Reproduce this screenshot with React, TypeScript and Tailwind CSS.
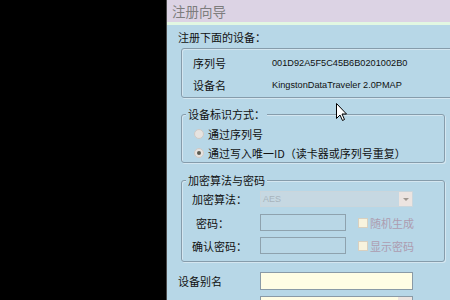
import React from "react";

const cjk = { fontFamily: '"Noto Sans CJK SC", "Noto Sans", sans-serif' };
const lat = { fontFamily: '"Liberation Sans", Arial, sans-serif' };

function GroupBox({
  label,
  className,
  children,
}: {
  label?: string;
  className: string;
  children: React.ReactNode;
}) {
  return (
    <div
      className={`relative shrink-0 border border-[#869cab] rounded-[3px] shadow-[inset_1px_1px_0_#d4e6f0,1px_1px_0_#d4e6f0] ${className}`}
    >
      {label && (
        <div
          className="absolute -top-[8px] left-[4px] bg-[#b7d7e7] px-[2px] text-[11px] leading-[14px] text-[#111]"
          style={cjk}
        >
          {label}
        </div>
      )}
      {children}
    </div>
  );
}

function Checkbox({ label }: { label: string }) {
  return (
    <div className="flex items-center ml-[12px]">
      <div className="w-[10px] h-[10px] bg-[#f7f3de] border border-[#d8d0c0]" />
      <span className="ml-[2px] text-[11px] leading-[14px] text-[#ad9cb0]" style={cjk}>
        {label}
      </span>
    </div>
  );
}

export default function App() {
  return (
    <div className="w-[450px] h-[300px] flex bg-black overflow-hidden">
      <div className="w-[166px] shrink-0 h-full bg-black" />
      <div className="w-px shrink-0 h-full bg-[#4a4a4a]" />
      <div className="relative flex-1 h-full flex flex-col bg-[#b7d7e7] overflow-hidden">
        <div className="h-[22px] shrink-0 bg-[#dcd3e4] flex items-center pl-[5px]">
          <span className="text-[13.5px] leading-[18px] text-[#7d7d7d]" style={cjk}>
            注册向导
          </span>
        </div>
        <div className="h-[3px] shrink-0 bg-[#e2f7e2]" />
        <div className="flex flex-col shrink-0 pl-[11px]">
          <div className="mt-[5px] h-[14px] shrink-0 text-[11px] leading-[14px] text-[#111]" style={cjk}>
            注册下面的设备：
          </div>
          <GroupBox className="mt-[4px] ml-[3px] w-[300px] min-w-[300px] h-[50px] pt-[7px]">
            <div className="flex items-center h-[14px]">
              <span className="w-[90px] shrink-0 pl-[11px] text-[11px] leading-[14px] text-[#111]" style={cjk}>
                序列号
              </span>
              <span className="text-[9.2px] leading-[14px] text-[#111] whitespace-nowrap" style={lat}>
                001D92A5F5C45B6B0201002B0
              </span>
            </div>
            <div className="flex items-center h-[14px] mt-[8px]">
              <span className="w-[90px] shrink-0 pl-[11px] text-[11px] leading-[14px] text-[#111]" style={cjk}>
                设备名
              </span>
              <span className="text-[9.2px] leading-[14px] text-[#111] whitespace-nowrap" style={lat}>
                KingstonDataTraveler 2.0PMAP
              </span>
            </div>
          </GroupBox>
          <GroupBox label="设备标识方式：" className="mt-[16px] ml-[3px] w-[264px] h-[49px] pt-[12px]">
            <div className="flex items-center h-[14px] pl-[12px]">
              <div className="w-[10px] h-[10px] rounded-full bg-[#e6e3e0] border border-[#cfcac6]" />
              <span className="ml-[4px] text-[11px] leading-[14px] text-[#111]" style={cjk}>
                通过序列号
              </span>
            </div>
            <div className="flex items-center h-[14px] mt-[5px] pl-[12px]">
              <div className="w-[10px] h-[10px] rounded-full bg-[#e6e3e0] border border-[#cfcac6] flex items-center justify-center">
                <div className="w-[4px] h-[4px] rounded-full bg-[#5a5a50]" />
              </div>
              <span className="ml-[4px] text-[11px] leading-[14px] text-[#111] whitespace-nowrap" style={cjk}>
                通过写入唯一ID（读卡器或序列号重复）
              </span>
            </div>
          </GroupBox>
          <GroupBox label="加密算法与密码" className="mt-[17px] ml-[3px] w-[264px] h-[82px] pt-[10px]">
            <div className="flex items-center h-[16px]">
              <span className="w-[78px] shrink-0 pl-[10px] text-[11px] leading-[14px] text-[#111]" style={cjk}>
                加密算法：
              </span>
              <div className="w-[153px] h-[16px] border border-[#cad6dc] bg-[#c6d8e2] flex items-center justify-between">
                <span className="pl-[2px] text-[9px] leading-[12px] text-[#a8b4bc]" style={lat}>
                  AES
                </span>
                <div className="w-[13px] h-[14px] bg-[#ece4e0] flex items-center justify-center">
                  <div className="w-0 h-0 border-l-[3px] border-r-[3px] border-t-[3px] border-l-transparent border-r-transparent border-t-[#a09890]" />
                </div>
              </div>
            </div>
            <div className="flex items-center h-[17px] mt-[7px]">
              <span className="w-[78px] shrink-0 pl-[14px] text-[11px] leading-[14px] text-[#111]" style={cjk}>
                密码：
              </span>
              <div className="w-[86px] h-[17px] border border-[#8ea2ae] bg-[#b9d7e6]" />
              <Checkbox label="随机生成" />
            </div>
            <div className="flex items-center h-[17px] mt-[6px]">
              <span className="w-[78px] shrink-0 pl-[10px] text-[11px] leading-[14px] text-[#111]" style={cjk}>
                确认密码：
              </span>
              <div className="w-[86px] h-[17px] border border-[#8ea2ae] bg-[#b9d7e6]" />
              <Checkbox label="显示密码" />
            </div>
          </GroupBox>
          <div className="flex items-center h-[18px] mt-[10px] shrink-0">
            <span className="w-[82px] shrink-0 text-[11px] leading-[14px] text-[#111]" style={cjk}>
              设备别名
            </span>
            <div className="w-[153px] h-[18px] border border-[#8a9aa6] bg-[#fffde4]" />
          </div>
          <div className="flex items-center h-[18px] mt-[6px] pl-[82px] shrink-0">
            <div className="w-[153px] h-[18px] border border-[#8a9aa6] bg-[#fffde4] flex justify-end">
              <div className="w-[14px] h-full bg-[#ece4e0]" />
            </div>
          </div>
        </div>
        <svg
          className="absolute left-[169px] top-[103px]"
          width="12"
          height="19"
          viewBox="0 0 12 19"
        >
          <path
            d="M0.5 0.5 L0.5 15.5 L4 12 L6.5 17.5 L8.5 16.5 L6 11 L10.5 11 Z"
            fill="#ffffff"
            stroke="#000000"
            strokeWidth="1"
            strokeLinejoin="miter"
          />
        </svg>
      </div>
    </div>
  );
}
